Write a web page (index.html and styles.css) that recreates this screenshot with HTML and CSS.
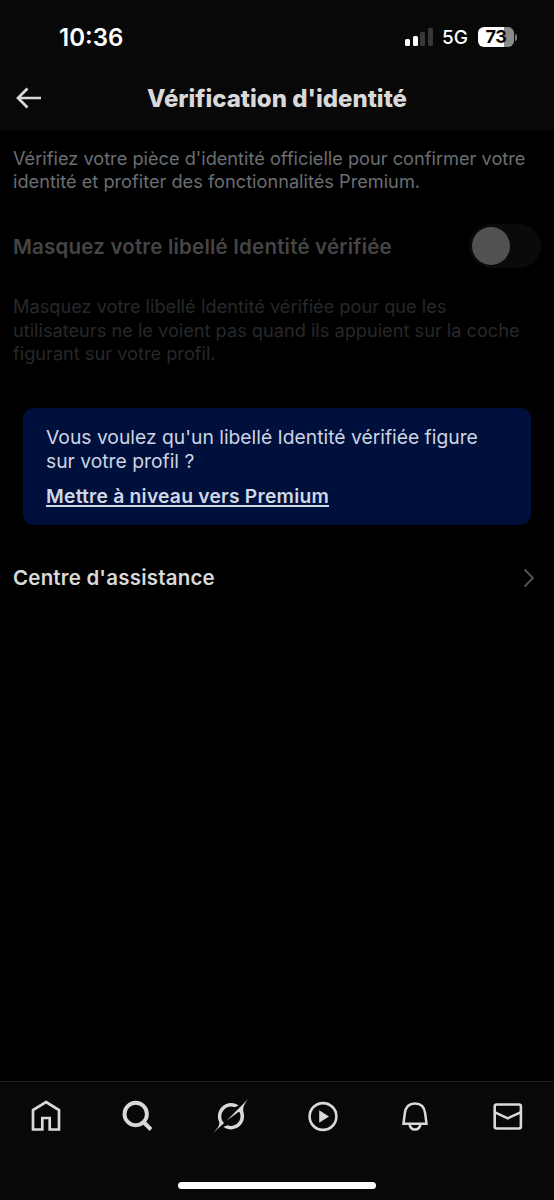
FILE: index.html
```html
<!DOCTYPE html>
<html lang="fr">
<head>
<meta charset="utf-8">
<title>Vérification d'identité</title>
<link rel="stylesheet" href="styles.css">
</head>
<body>
<div class="screen">
  <header class="header">
    <div class="status">
      <span class="time">10:36</span>
      <div class="status-right">
        <div class="signal"><i class="bar b1"></i><i class="bar b2"></i><i class="bar b3"></i><i class="bar b4"></i></div>
        <span class="network">5G</span>
        <div class="battery"><div class="level">73</div><i class="tip"></i></div>
      </div>
    </div>
    <div class="titlebar">
      <svg class="back" viewBox="0 0 26 22"><path d="M25 11H2M11.5 1.5L2 11l9.500 9.500" fill="none" stroke="currentColor" stroke-width="2.700"/></svg>
      <h1 class="title">Vérification d'identité</h1>
    </div>
  </header>
  <main class="content">
    <p class="intro">Vérifiez votre pièce d'identité officielle pour confirmer votre<br>identité et profiter des fonctionnalités Premium.</p>
    <div class="setting">
      <span class="setting-label">Masquez votre libellé Identité vérifiée</span>
      <div class="toggle"><i class="knob"></i></div>
    </div>
    <p class="hint">Masquez votre libellé Identité vérifiée pour que les<br>utilisateurs ne le voient pas quand ils appuient sur la coche<br>figurant sur votre profil.</p>
    <section class="card">
      <p class="card-text">Vous voulez qu'un libellé Identité vérifiée figure<br>sur votre profil ?</p>
      <a class="card-link">Mettre à niveau vers Premium</a>
    </section>
    <div class="row">
      <span class="row-label">Centre d'assistance</span>
      <svg class="chevron" viewBox="0 0 12 20"><path d="M1.500 1.500L10 10l-8.500 8.500" fill="none" stroke="currentColor" stroke-width="1.900"/></svg>
    </div>
  </main>
  <footer class="footer">
    <nav class="tabs">
      <svg class="tab" viewBox="0 0 36 36"><path d="M18 4L31 12V31.500H21.700V20H14.300V31.500H5V12Z" fill="none" stroke="currentColor" stroke-width="2.700"/></svg>
      <svg class="tab" viewBox="0 0 36 36"><circle cx="15.700" cy="16" r="11.200" fill="none" stroke="currentColor" stroke-width="3.900"/><path d="M23.500 24L31 31.500" fill="none" stroke="currentColor" stroke-width="4"/></svg>
      <svg class="tab grok" viewBox="0 0 33 32"><path fill="currentColor" d="M12.745 20.54l10.970-8.190c.539-.4 1.307-.244 1.564.38 1.349 3.288.746 7.241-1.938 9.955-2.683 2.714-6.417 3.310-9.830 1.954l-3.728 1.745c5.347 3.697 11.840 2.782 15.898-1.324 3.219-3.255 4.216-7.692 3.284-11.693l.008.009c-1.351-5.878.332-8.227 3.782-13.031L33 0l-4.540 4.590v-.014L12.743 20.544m-2.263 1.987c-3.837-3.707-3.175-9.446.1-12.755 2.420-2.449 6.388-3.448 9.852-1.979l3.720-1.737c-.67-.49-1.530-1.017-2.515-1.387-4.455-1.854-9.789-.931-13.410 2.728-3.483 3.523-4.579 8.940-2.697 13.561 1.405 3.454-.899 5.898-3.220 8.364C1.490 30.200.666 31.074 0 32l10.478-9.466"/></svg>
      <svg class="tab" viewBox="0 0 36 36"><circle cx="18" cy="18.500" r="13.400" fill="none" stroke="currentColor" stroke-width="2.600"/><path fill="currentColor" d="M14.200 12.300L24 18.500l-9.800 6.200z"/></svg>
      <svg class="tab" viewBox="0 0 36 36"><path d="M6.500 25.700H29.500L28.200 15.500C27.500 9 23.500 5.500 18 5.500S8.500 9 7.800 15.500ZM12.500 26c.5 3.500 2.600 5.500 5.500 5.500s5-2 5.500-5.500" fill="none" stroke="currentColor" stroke-width="2.500"/></svg>
      <svg class="tab" viewBox="0 0 36 36"><rect x="4.700" y="6.500" width="26.200" height="24" rx="2" fill="none" stroke="currentColor" stroke-width="2.600"/><path d="M5 14.300l12.800 6 12.800-6" fill="none" stroke="currentColor" stroke-width="2.500"/></svg>
    </nav>
    <i class="home-indicator"></i>
  </footer>
</div>
</body>
</html>
```
FILE: styles.css
```css
* { box-sizing: border-box; }
body { margin: 0; background: #000; font-family: Inter, "Liberation Sans", sans-serif; color: #d9d9d9; white-space: nowrap; }
p, h1 { margin: 0; }
i { display: block; }
.screen { width: 554px; height: 1200px; display: flex; flex-direction: column; }
.header { height: 130px; background: #080808; padding-top: 22px; }
.status { height: 30px; display: flex; justify-content: space-between; align-items: center; padding: 0 37px 0 59px; color: #fff; }
.time { font-size: 24px; font-weight: 600; letter-spacing: 0; }
.status-right { display: flex; align-items: center; }
.signal { display: flex; align-items: flex-end; gap: 2.500px; height: 18px; width: 28px; }
.bar { width: 5px; border-radius: 1.500px; background: #fff; }
.b1 { height: 7px; }
.b2 { height: 10px; }
.b3 { height: 14px; background: #373737; }
.b4 { height: 18px; background: #373737; }
.network { font-size: 19px; font-weight: 500; margin-left: 9px; width: 27px; }
.battery { display: flex; align-items: center; gap: 1px; margin-left: 9px; }
.level { width: 36px; height: 20px; border-radius: 6px; background: linear-gradient(90deg, #fff 73%, #8b8b8b 73%); color: #080808; font-size: 18px; line-height: 20px; font-weight: 700; text-align: center; letter-spacing: -0.300px; }
.tip { width: 2px; height: 7px; border-radius: 0 2px 2px 0; background: #777; }
.titlebar { height: 48px; margin-top: 22px; display: grid; grid-template-columns: 44px 1fr 44px; align-items: center; }
.back { width: 26px; height: 22px; margin-left: 16px; }
.title { font-size: 24px; font-weight: 800; text-align: center; letter-spacing: 0; }
.content { flex: 1; }
.intro, .hint { font-size: 18.200px; line-height: 23.200px; }
.intro { padding: 17px 13px 0; color: #6b6e72; }
.setting { display: flex; align-items: center; justify-content: space-between; height: 44px; margin-top: 31px; padding: 0 13px; }
.setting-label { font-size: 20.500px; font-weight: 600; letter-spacing: 0.200px; color: #454545; }
.toggle { width: 72px; height: 44px; border-radius: 22px; background: #0a0a0b; padding: 3px; }
.knob { width: 38px; height: 38px; border-radius: 50%; background: #515151; }
.hint { padding: 27px 13px 0; color: #27282a; }
.card { margin: 43px 23px 0; height: 117px; border-radius: 11px; background: #00103d; padding: 17px 23px; }
.card-text { font-size: 19.300px; line-height: 24px; color: #cdd3e0; }
.card-link { display: block; font-size: 19.300px; line-height: 24px; font-weight: 600; letter-spacing: 0.220px; margin-top: 11px; color: #d0d7e5; text-decoration: underline; text-decoration-thickness: 1.500px; text-underline-offset: 2px; }
.row { display: flex; align-items: center; justify-content: space-between; height: 48px; margin-top: 29px; padding: 0 19px 0 13px; }
.row-label { font-size: 20.500px; font-weight: 600; letter-spacing: 0.200px; padding-bottom: 2px; }
.chevron { width: 12px; height: 20px; color: #535353; }
.footer { height: 119px; background: #080808; border-top: 1px solid #202020; display: flex; flex-direction: column; align-items: center; }
.tabs { width: 100%; height: 68px; display: grid; grid-template-columns: repeat(6, 1fr); align-items: center; justify-items: center; }
.tab { width: 36px; height: 36px; }
.grok { width: 35px; height: 34px; }
.home-indicator { width: 198px; height: 7px; border-radius: 4px; background: #fff; margin-top: 31.500px; }
```
